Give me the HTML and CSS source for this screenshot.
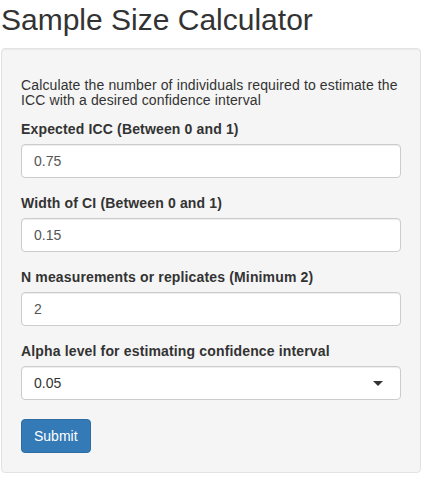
FILE: index.html
```html
<!DOCTYPE html>
<html>
<head>
<meta charset="utf-8">
<title>Sample Size Calculator</title>
<link rel="stylesheet" href="styles.css">
</head>
<body>
<div class="page">
  <h2 class="title">Sample Size Calculator</h2>
  <div class="well">
    <h5 class="intro">Calculate the number of individuals required to estimate the ICC with a desired confidence interval</h5>
    <div class="form-group">
      <label class="control-label" for="icc">Expected ICC (Between 0 and 1)</label>
      <input id="icc" class="form-control" type="text" value="0.75">
    </div>
    <div class="form-group">
      <label class="control-label" for="width">Width of CI (Between 0 and 1)</label>
      <input id="width" class="form-control" type="text" value="0.15">
    </div>
    <div class="form-group">
      <label class="control-label" for="reps">N measurements or replicates (Minimum 2)</label>
      <input id="reps" class="form-control" type="text" value="2">
    </div>
    <div class="form-group select-group">
      <label class="control-label">Alpha level for estimating confidence interval</label>
      <div class="select-box"><span class="select-value">0.05</span><span class="caret"></span></div>
    </div>
    <button class="btn btn-primary" type="button">Submit</button>
  </div>
</div>
</body>
</html>
```

FILE: styles.css
```css
* {
  box-sizing: border-box;
}

html, body {
  margin: 0;
  padding: 0;
  background: #fff;
}

body {
  font-family: "Liberation Sans", Arial, Helvetica, sans-serif;
  font-size: 14px;
  line-height: 1.42857143;
  color: #333;
}

.page {
  padding: 0 8px 0 1px;
}

.title {
  margin: 3px 0 12px;
  font-size: 30px;
  font-weight: 500;
  line-height: 1.1;
  color: #333;
}

.well {
  width: 420px;
  padding: 19px;
  background-color: #f5f5f5;
  border: 1px solid #e3e3e3;
  border-radius: 4px;
  box-shadow: inset 0 1px 1px rgba(0, 0, 0, 0.05);
}

.intro {
  margin: 10px 0;
  font-size: 14px;
  font-weight: 500;
  line-height: 1.1;
  color: #333;
  letter-spacing: 0.13px;
}

.form-group {
  margin-bottom: 15px;
}

.select-group {
  margin-bottom: 19px;
}

.control-label {
  display: inline-block;
  max-width: 100%;
  margin-bottom: 5px;
  font-weight: 700;
  letter-spacing: 0.15px;
}

.form-control {
  display: block;
  width: 100%;
  height: 34px;
  padding: 6px 12px;
  font-family: inherit;
  font-size: 14px;
  line-height: 1.42857143;
  color: #555;
  background-color: #fff;
  border: 1px solid #ccc;
  border-radius: 4px;
  box-shadow: inset 0 1px 1px rgba(0, 0, 0, 0.075);
  outline: none;
}

.select-box {
  display: flex;
  align-items: center;
  justify-content: space-between;
  width: 100%;
  height: 34px;
  padding: 6px 17px 6px 12px;
  color: #333;
  background-color: #fff;
  border: 1px solid #ccc;
  border-radius: 4px;
  box-shadow: inset 0 1px 1px rgba(0, 0, 0, 0.075);
}

.caret {
  width: 0;
  height: 0;
  border-style: solid;
  border-width: 5px 5px 0 5px;
  border-color: #333 transparent transparent transparent;
  margin-top: 1px;
}

.btn {
  display: inline-block;
  padding: 6px 12px;
  font-family: inherit;
  font-size: 14px;
  line-height: 1.42857143;
  font-weight: 400;
  border: 1px solid transparent;
  border-radius: 4px;
  cursor: pointer;
}

.btn-primary {
  color: #fff;
  background-color: #337ab7;
  border-color: #2e6da4;
}
```
